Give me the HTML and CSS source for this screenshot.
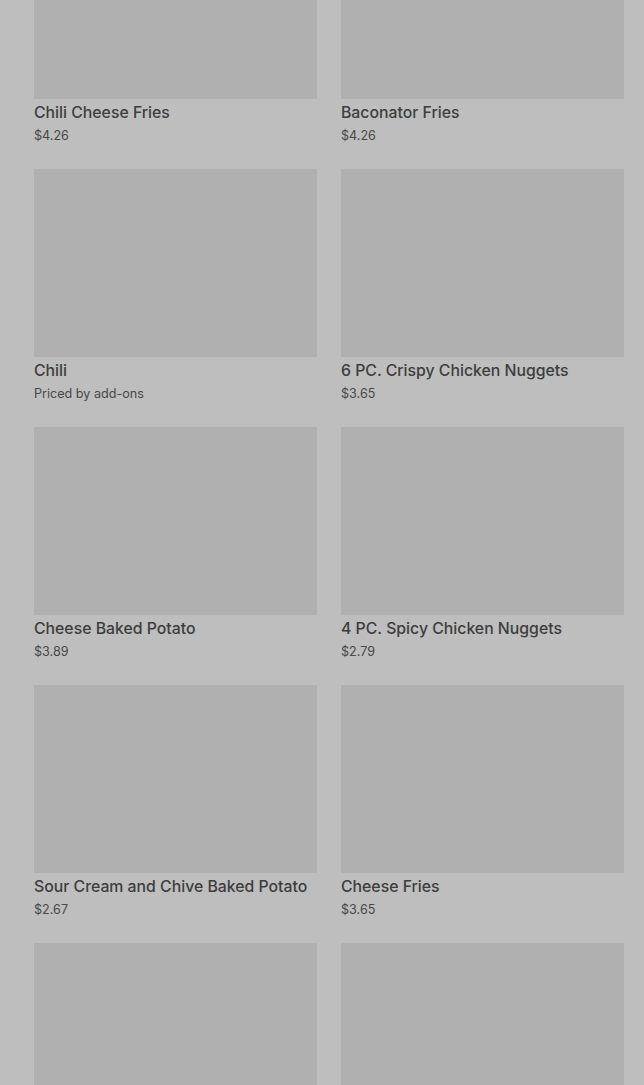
FILE: index.html
```html
<!DOCTYPE html>
<html lang="en">

<head>
	<meta charset="UTF-8">
	<meta name="viewport" content="width=device-width, initial-scale=1.0">
	<title>Menu</title>
	<link rel="stylesheet" href="styles.css">
</head>

<body>
	<div class="menu-grid">
		<div class="item">
			<div class="item-img"></div>
			<div class="item-name">Chili Cheese Fries</div>
			<div class="item-price">$4.26</div>
		</div>
		<div class="item">
			<div class="item-img"></div>
			<div class="item-name">Baconator Fries</div>
			<div class="item-price">$4.26</div>
		</div>
		<div class="item">
			<div class="item-img"></div>
			<div class="item-name">Chili</div>
			<div class="item-price">Priced by add-ons</div>
		</div>
		<div class="item">
			<div class="item-img"></div>
			<div class="item-name">6 PC. Crispy Chicken Nuggets</div>
			<div class="item-price">$3.65</div>
		</div>
		<div class="item">
			<div class="item-img"></div>
			<div class="item-name">Cheese Baked Potato</div>
			<div class="item-price">$3.89</div>
		</div>
		<div class="item">
			<div class="item-img"></div>
			<div class="item-name">4 PC. Spicy Chicken Nuggets</div>
			<div class="item-price">$2.79</div>
		</div>
		<div class="item">
			<div class="item-img"></div>
			<div class="item-name">Sour Cream and Chive Baked Potato</div>
			<div class="item-price">$2.67</div>
		</div>
		<div class="item">
			<div class="item-img"></div>
			<div class="item-name">Cheese Fries</div>
			<div class="item-price">$3.65</div>
		</div>
		<div class="item">
			<div class="item-img"></div>
			<div class="item-name">&nbsp;</div>
			<div class="item-price">&nbsp;</div>
		</div>
		<div class="item">
			<div class="item-img"></div>
			<div class="item-name">&nbsp;</div>
			<div class="item-price">&nbsp;</div>
		</div>
	</div>
</body>

</html>
```

FILE: styles.css
```css
/* Base reset */
* {
	margin: 0;
	padding: 0;
	box-sizing: border-box;
	font-family: Inter, Roboto, sans-serif;
}

body {
	background: #bebebe;
	overflow: hidden;
	height: 1085px;
}

.menu-grid {
	display: grid;
	grid-template-columns: 283px 283px;
	column-gap: 24px;
	padding: 0 20px 0 34px;
	margin-top: -89px;
}

.item {
	height: 258px;
}

.item-img {
	height: 188px;
	background: #b0b0b0;
}

.item-name {
	margin-top: 4px;
	font-size: 15.8px;
	font-weight: 500;
	line-height: 20px;
	color: #3d3d3d;
	white-space: nowrap;
}

.item-price {
	margin-top: 4px;
	font-size: 12.6px;
	line-height: 18px;
	color: #484848;
}
```
